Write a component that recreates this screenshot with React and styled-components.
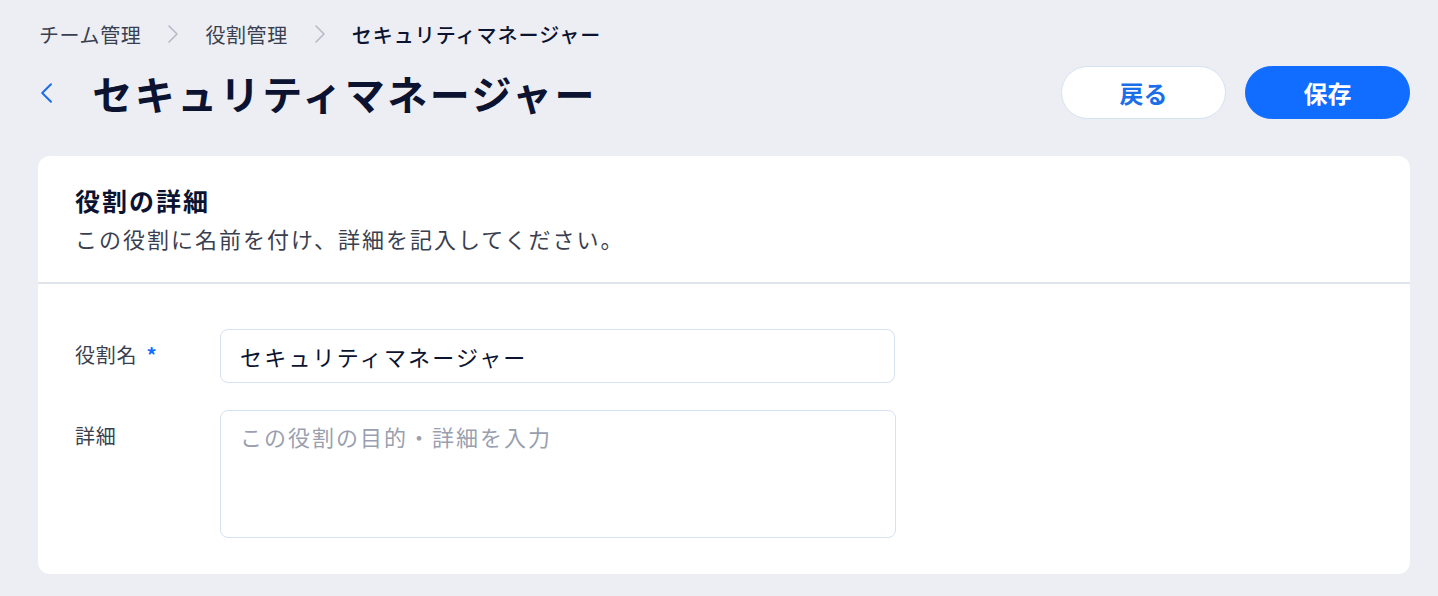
import React from 'react';
import styled, { createGlobalStyle } from 'styled-components';

const colors = {
  page: '#eceef3',
  white: '#ffffff',
  ink: '#0c1330',
  text: '#3a3f50',
  muted: '#9a9fb0',
  blue: '#116dff',
  blueText: '#1a6ee8',
  line: '#dfe3ea',
  field: '#d5e2f0',
};

const GlobalStyle = createGlobalStyle`
  body {
    margin: 0;
    background: ${colors.page};
    font-family: "Noto Sans CJK JP", "Noto Sans", sans-serif;
    color: ${colors.ink};
  }
`;

const Page = styled.div`
  box-sizing: border-box;
  width: 1438px;
  height: 596px;
  padding: 20px 28px 22px 38px;
  display: flex;
  flex-direction: column;
`;

const Breadcrumbs = styled.nav`
  display: flex;
  align-items: center;
  gap: 26px;
  height: 28px;
  padding-left: 1px;
  font-size: 20px;
  letter-spacing: 0.6px;
  color: ${colors.text};

  .current {
    color: ${colors.ink};
    font-weight: 500;
    letter-spacing: 1px;
  }
`;

const HeaderRow = styled.div`
  display: flex;
  align-items: center;
  justify-content: space-between;
  margin-top: 18px;
  height: 53px;
`;

const TitleGroup = styled.div`
  display: flex;
  align-items: center;
  gap: 39px;

  h1 {
    margin: 0;
    font-size: 40px;
    letter-spacing: 2.5px;
    font-weight: 700;
    line-height: 1;
    color: ${colors.ink};
  }
`;

const BackLink = styled.button`
  border: none;
  background: none;
  padding: 0 0 0 2px;
  display: flex;
  color: ${colors.blueText};
  cursor: pointer;
`;

const Actions = styled.div`
  display: flex;
  gap: 19px;
`;

const PillButton = styled.button`
  box-sizing: border-box;
  width: 165px;
  height: 53px;
  border-radius: 27px;
  font-family: inherit;
  font-size: 24px;
  font-weight: 700;
  cursor: pointer;
  border: 1px solid ${(p) => (p.$primary ? colors.blue : colors.field)};
  background: ${(p) => (p.$primary ? colors.blue : colors.white)};
  color: ${(p) => (p.$primary ? colors.white : colors.blueText)};
`;

const Card = styled.section`
  margin-top: 37px;
  background: ${colors.white};
  border-radius: 12px;
  flex: 1;
  display: flex;
  flex-direction: column;
`;

const CardHeader = styled.header`
  padding: 27px 37px 27px;
  border-bottom: 2px solid ${colors.line};

  h2 {
    margin: 0;
    font-size: 25px;
    letter-spacing: 2px;
    font-weight: 700;
    line-height: 34px;
    color: ${colors.ink};
  }

  p {
    margin: 4px 0 0;
    font-size: 22px;
    letter-spacing: 2px;
    line-height: 34px;
    color: ${colors.text};
  }
`;

const Form = styled.div`
  padding: 45px 37px 0;
  display: flex;
  flex-direction: column;
  gap: 27px;
`;

const FieldRow = styled.div`
  display: grid;
  grid-template-columns: 145px 676px;
  align-items: start;
`;

const Label = styled.label`
  font-size: 20px;
  letter-spacing: 0.8px;
  color: ${colors.text};
  padding-top: 13px;
  line-height: 26px;

  span {
    color: ${colors.blue};
    margin-left: 9px;
    font-weight: 700;
  }
`;

const TextInput = styled.input`
  box-sizing: border-box;
  width: 675px;
  height: 54px;
  border: 1px solid ${colors.field};
  border-radius: 8px;
  padding: 0 19px;
  font-family: inherit;
  font-size: 22px;
  letter-spacing: 2.2px;
  color: ${colors.ink};
  outline: none;
`;

const TextArea = styled.textarea`
  box-sizing: border-box;
  width: 676px;
  height: 128px;
  border: 1px solid ${colors.field};
  border-radius: 8px;
  padding: 10px 19px;
  font-family: inherit;
  font-size: 22px;
  letter-spacing: 2px;
  line-height: 30px;
  color: ${colors.ink};
  resize: none;
  outline: none;

  &::placeholder {
    color: ${colors.muted};
  }
`;

const Chevron = ({ dir = 'right', size = 20, color = '#b4b8c4', width = 1.5 }) => (
  <svg width={size * 0.6} height={size} viewBox="0 0 12 20" fill="none">
    <path
      d={dir === 'right' ? 'M2 2l8 8-8 8' : 'M10 2L2 10l8 8'}
      stroke={color}
      strokeWidth={width}
      strokeLinecap="round"
      strokeLinejoin="round"
    />
  </svg>
);

export default function App() {
  return (
    <>
      <GlobalStyle />
      <Page>
        <Breadcrumbs>
          <span>チーム管理</span>
          <Chevron />
          <span>役割管理</span>
          <Chevron />
          <span className="current">セキュリティマネージャー</span>
        </Breadcrumbs>

        <HeaderRow>
          <TitleGroup>
            <BackLink aria-label="戻る">
              <Chevron dir="left" size={22} color={colors.blueText} width={1.8} />
            </BackLink>
            <h1>セキュリティマネージャー</h1>
          </TitleGroup>
          <Actions>
            <PillButton>戻る</PillButton>
            <PillButton $primary>保存</PillButton>
          </Actions>
        </HeaderRow>

        <Card>
          <CardHeader>
            <h2>役割の詳細</h2>
            <p>この役割に名前を付け、詳細を記入してください。</p>
          </CardHeader>
          <Form>
            <FieldRow>
              <Label>
                役割名<span>*</span>
              </Label>
              <TextInput defaultValue="セキュリティマネージャー" />
            </FieldRow>
            <FieldRow>
              <Label>詳細</Label>
              <TextArea placeholder="この役割の目的・詳細を入力" />
            </FieldRow>
          </Form>
        </Card>
      </Page>
    </>
  );
}
